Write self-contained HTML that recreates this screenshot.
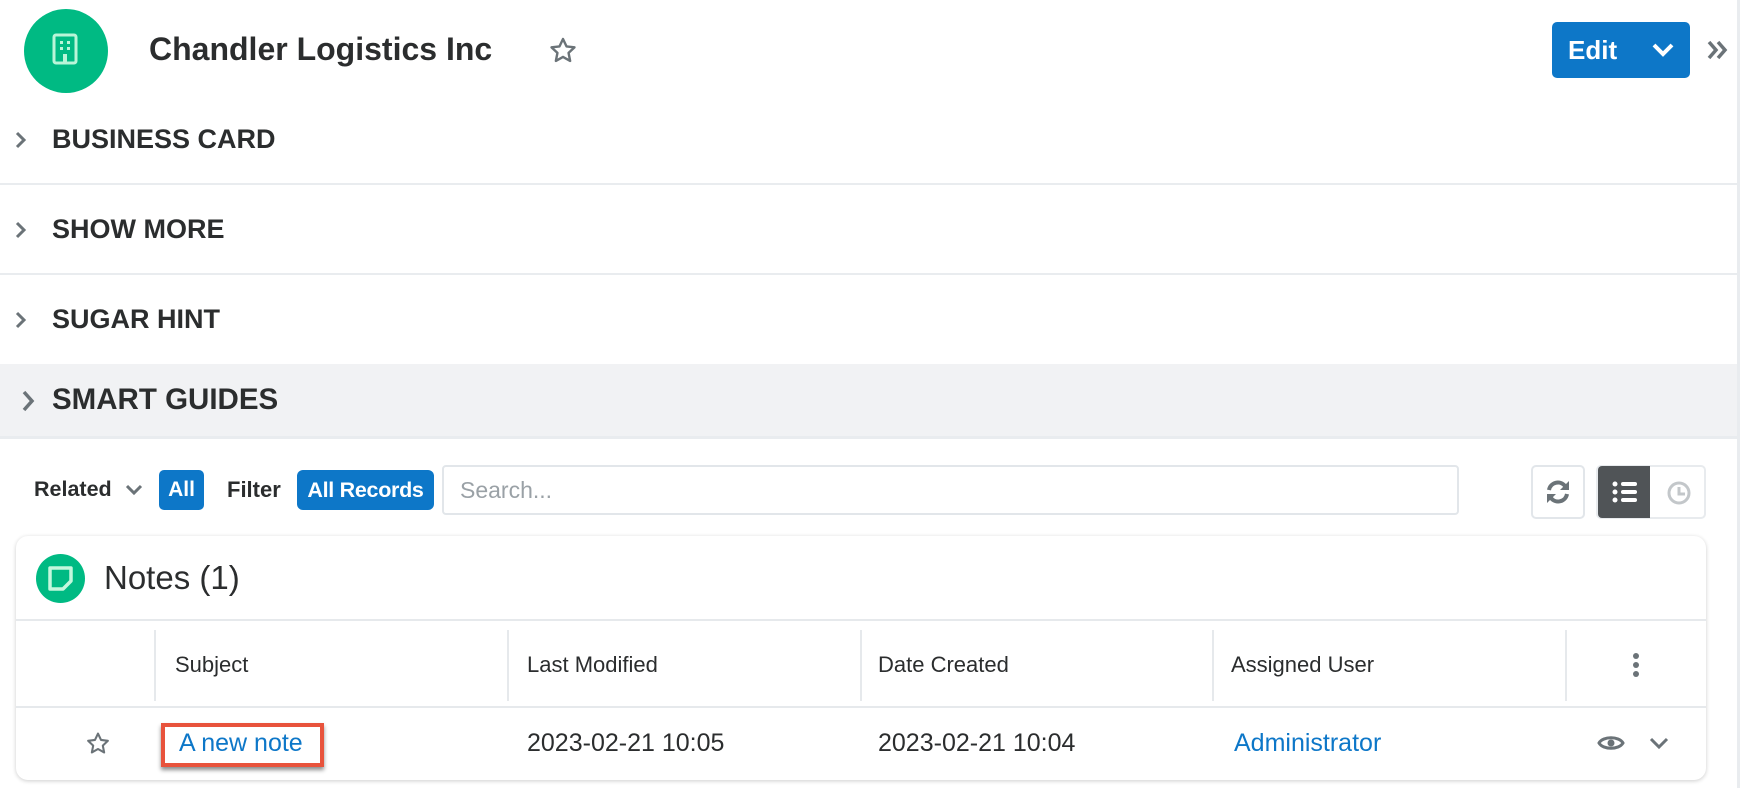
<!DOCTYPE html>
<html><head><meta charset="utf-8"><style>
*{margin:0;padding:0;box-sizing:border-box}
body{width:1740px;height:788px;background:#fff;font-family:"Liberation Sans",sans-serif;color:#2b2d2e;position:relative;overflow:hidden}
.a{position:absolute}
.sec{position:absolute;left:0;width:1738px;font-weight:bold;font-size:27px;color:#2b2d2e}
.line{position:absolute;left:0;width:1738px;height:2px;background:#e9ecef}
.th{position:absolute;top:652px;font-size:22px;color:#2b2d2e}
.vs{position:absolute;top:630px;width:2px;height:71px;background:#e6e9ec}
.td{position:absolute;top:729px;font-size:25px}
</style></head><body>
<div class="a" style="left:1737px;top:0;width:3px;height:788px;background:#e9ecef"></div>

<div class="a" style="left:24px;top:9px;width:84px;height:84px;border-radius:50%;background:#00ba83"></div>
<svg class="a" style="left:52px;top:33px" width="26" height="32" viewBox="0 0 26 32"><rect x="2" y="2" width="22" height="28" rx="2" fill="none" stroke="#b9f5d8" stroke-width="3"/><rect x="8" y="8" width="3" height="3" fill="#b9f5d8"/><rect x="15" y="8" width="3" height="3" fill="#b9f5d8"/><rect x="8" y="14" width="3" height="3" fill="#b9f5d8"/><rect x="15" y="14" width="3" height="3" fill="#b9f5d8"/><rect x="11" y="21" width="4" height="9" fill="#b9f5d8"/></svg>
<div class="a" style="left:149px;top:31px;font-size:32px;font-weight:bold;color:#2b2d2e">Chandler Logistics Inc</div>
<svg class="a" style="left:548px;top:36px" width="30" height="29" viewBox="0 0 24 24"><path d="M12 2.5l2.9 6.1 6.6.8-4.9 4.6 1.3 6.6L12 17.3l-5.9 3.3 1.3-6.6-4.9-4.6 6.6-.8z" fill="none" stroke="#6b7378" stroke-width="2" stroke-linejoin="round"/></svg>

<div class="a" style="left:1552px;top:22px;width:138px;height:56px;background:#0d77c8;border-radius:5px"></div>
<div class="a" style="left:1568px;top:35px;font-size:26px;font-weight:bold;color:#fff">Edit</div>
<svg class="a" style="left:1651px;top:42px" width="24" height="16" viewBox="0 0 24 16"><path d="M3 3l9 9 9-9" fill="none" stroke="#fff" stroke-width="4"/></svg>
<svg class="a" style="left:1706px;top:38px" width="24" height="24" viewBox="0 0 24 24"><path d="M3 4l7 8-7 8M12 4l7 8-7 8" fill="none" stroke="#6b7378" stroke-width="3.5"/></svg>

<svg class="a" style="left:14px;top:130px" width="14" height="20" viewBox="0 0 14 20"><path d="M3 3l7 7-7 7" fill="none" stroke="#6b7378" stroke-width="3"/></svg>
<div class="sec" style="left:52px;top:124px;width:auto">BUSINESS CARD</div>
<div class="line" style="top:183px"></div>
<svg class="a" style="left:14px;top:220px" width="14" height="20" viewBox="0 0 14 20"><path d="M3 3l7 7-7 7" fill="none" stroke="#6b7378" stroke-width="3"/></svg>
<div class="sec" style="left:52px;top:214px;width:auto">SHOW MORE</div>
<div class="line" style="top:273px"></div>
<svg class="a" style="left:14px;top:310px" width="14" height="20" viewBox="0 0 14 20"><path d="M3 3l7 7-7 7" fill="none" stroke="#6b7378" stroke-width="3"/></svg>
<div class="sec" style="left:52px;top:304px;width:auto">SUGAR HINT</div>
<div class="a" style="left:0;top:364px;width:1737px;height:72px;background:#f1f2f4"></div>
<div class="line" style="top:436px;height:3px"></div>
<svg class="a" style="left:20px;top:388px" width="16" height="26" viewBox="0 0 16 26"><path d="M4 4l8 9-8 9" fill="none" stroke="#6b7378" stroke-width="3.5"/></svg>
<div class="sec" style="left:52px;top:383px;font-size:29.5px;width:auto">SMART GUIDES</div>

<div class="a" style="left:34px;top:477px;font-size:21.5px;font-weight:bold">Related</div>
<svg class="a" style="left:124px;top:483px" width="20" height="14" viewBox="0 0 20 14"><path d="M3 3l7 7 7-7" fill="none" stroke="#6b7378" stroke-width="3"/></svg>
<div class="a" style="left:159px;top:470px;width:45px;height:40px;background:#0d77c8;border-radius:5px;color:#fff;font-weight:bold;font-size:21px;text-align:center;line-height:40px">All</div>
<div class="a" style="left:227px;top:477px;font-size:22px;font-weight:bold">Filter</div>
<div class="a" style="left:297px;top:470px;width:137px;height:40px;background:#0d77c8;border-radius:6px;color:#fff;font-weight:bold;font-size:21.5px;text-align:center;line-height:40px;letter-spacing:-0.3px">All Records</div>
<div class="a" style="left:442px;top:465px;width:1017px;height:50px;border:2px solid #e2e6ea;border-radius:4px"></div>
<div class="a" style="left:460px;top:477px;font-size:23px;color:#9aa1a6">Search...</div>
<div class="a" style="left:1531px;top:465px;width:54px;height:54px;border:2px solid #e2e6ea;border-radius:5px"></div>
<svg class="a" style="left:1544px;top:479px" width="28" height="26" viewBox="0 0 28 26"><path d="M5 11a9 9 0 0 1 16-4" fill="none" stroke="#6b7378" stroke-width="4"/><path d="M25 2v9h-9z" fill="#6b7378"/><path d="M23 15a9 9 0 0 1-16 4" fill="none" stroke="#6b7378" stroke-width="4"/><path d="M3 24v-9h9z" fill="#6b7378"/></svg>
<div class="a" style="left:1596px;top:465px;width:110px;height:54px;border:2px solid #e8ebee;border-radius:5px"></div>
<div class="a" style="left:1598px;top:466px;width:52px;height:52px;background:#505457;border-radius:4px 0 0 4px"></div>
<svg class="a" style="left:1611px;top:480px" width="28" height="24" viewBox="0 0 28 24"><g fill="#fff"><circle cx="4" cy="4" r="2.5"/><circle cx="4" cy="12" r="2.5"/><circle cx="4" cy="20" r="2.5"/><rect x="10" y="2" width="16" height="4" rx="2"/><rect x="10" y="10" width="16" height="4" rx="2"/><rect x="10" y="18" width="16" height="4" rx="2"/></g></svg>
<svg class="a" style="left:1666px;top:480px" width="26" height="26" viewBox="0 0 26 26"><circle cx="13" cy="13" r="10" fill="none" stroke="#c3c7ca" stroke-width="3"/><path d="M13 7v7h6" fill="none" stroke="#c3c7ca" stroke-width="3"/></svg>

<div class="a" style="left:16px;top:536px;width:1690px;height:244px;border-radius:12px;background:#fff;box-shadow:0 1px 4px rgba(0,0,0,.2)"></div>
<div class="a" style="left:36px;top:554px;width:49px;height:49px;border-radius:50%;background:#00ba83"></div>
<svg class="a" style="left:47px;top:565px" width="27" height="27" viewBox="0 0 27 27"><path d="M3 3h21v13l-8 8H3z" fill="none" stroke="#c4f7dd" stroke-width="3.5" stroke-linejoin="round"/></svg>
<div class="a" style="left:104px;top:559px;font-size:33px;color:#2b2d2e">Notes (1)</div>
<div class="a" style="left:16px;top:619px;width:1690px;height:2px;background:#e6e9ec"></div>
<div class="vs" style="left:154px"></div><div class="vs" style="left:507px"></div><div class="vs" style="left:860px"></div><div class="vs" style="left:1212px"></div><div class="vs" style="left:1565px"></div>
<div class="th" style="left:175px">Subject</div>
<div class="th" style="left:527px">Last Modified</div>
<div class="th" style="left:878px">Date Created</div>
<div class="th" style="left:1231px">Assigned User</div>
<svg class="a" style="left:1630px;top:652px" width="12" height="26" viewBox="0 0 12 26"><g fill="#6b7378"><circle cx="6" cy="4" r="3"/><circle cx="6" cy="13" r="3"/><circle cx="6" cy="22" r="3"/></g></svg>
<div class="a" style="left:16px;top:706px;width:1690px;height:2px;background:#e6e9ec"></div>

<svg class="a" style="left:85px;top:731px" width="26" height="25" viewBox="0 0 24 24"><path d="M12 2.5l2.9 6.1 6.6.8-4.9 4.6 1.3 6.6L12 17.3l-5.9 3.3 1.3-6.6-4.9-4.6 6.6-.8z" fill="none" stroke="#6b7378" stroke-width="2" stroke-linejoin="round"/></svg>
<div class="a" style="left:161px;top:723px;width:163px;height:44px;border:4px solid #e8533c;box-shadow:0 3px 4px rgba(0,0,0,.45)"></div>
<div class="td" style="left:179px;color:#0d77c8">A new note</div>
<div class="td" style="left:527px">2023-02-21 10:05</div>
<div class="td" style="left:878px">2023-02-21 10:04</div>
<div class="td" style="left:1234px;color:#0d77c8">Administrator</div>
<svg class="a" style="left:1597px;top:733px" width="28" height="20" viewBox="0 0 28 20"><path d="M2 10C6 3 22 3 26 10 22 17 6 17 2 10z" fill="none" stroke="#6b7378" stroke-width="3"/><circle cx="14" cy="10" r="3.5" fill="#6b7378"/></svg>
<svg class="a" style="left:1648px;top:736px" width="22" height="14" viewBox="0 0 22 14"><path d="M3 3l8 8 8-8" fill="none" stroke="#6b7378" stroke-width="3"/></svg>
</body></html>
